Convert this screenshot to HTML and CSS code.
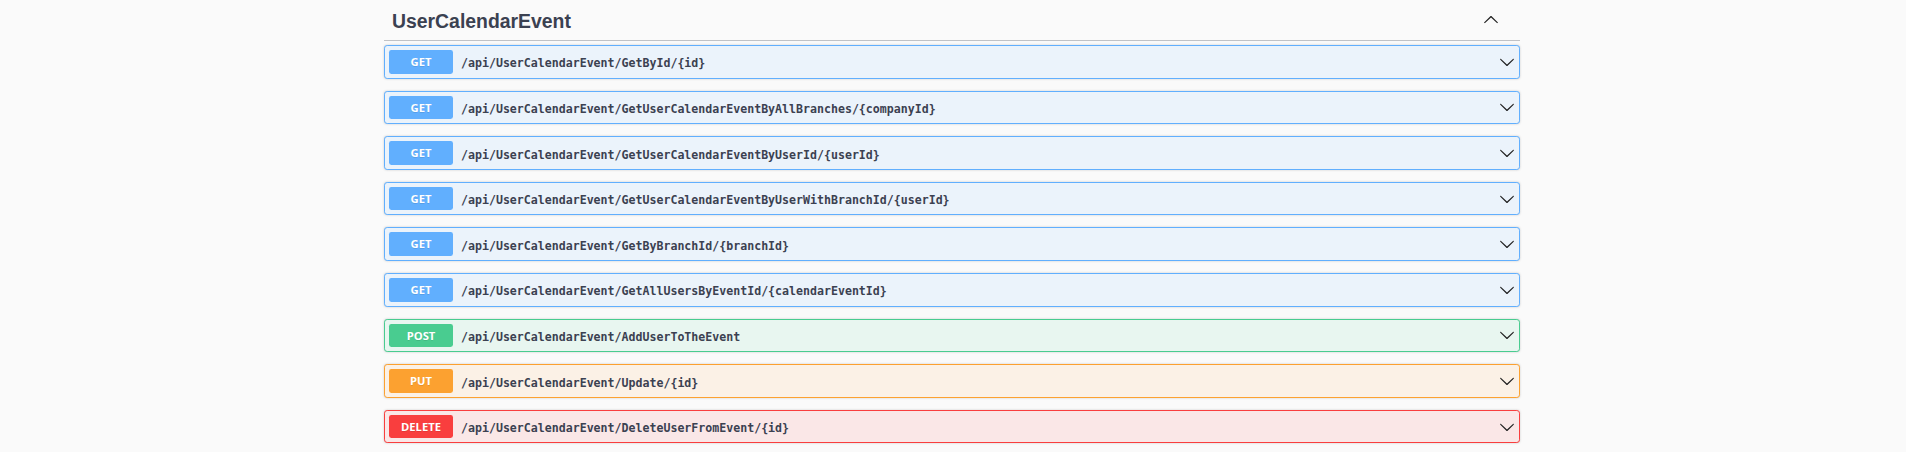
FILE: index.html
```html
<!DOCTYPE html>
<html>
<head>
<meta charset="utf-8">
<link rel="stylesheet" href="styles.css">
</head>
<body>
<div class="wrapper">
  <h3 class="tag">
    <span class="tag-name">UserCalendarEvent</span>
    <svg class="arrow arrow-up" viewBox="0 0 20 20" width="16" height="16"><path d="M17.418 6.109c.272-.268.709-.268.979 0s.279.701 0 .969l-7.908 7.83c-.27.268-.707.268-.979 0l-7.908-7.830c-.27-.268-.27-.701 0-.969.271-.268.709-.268.979 0L10 13.25l7.418-7.141z"/></svg>
  </h3>
  <div class="ops">
    <div class="op get"><span class="method">GET</span><span class="path">/api/UserCalendarEvent/GetById/{id}</span><svg class="arrow" viewBox="0 0 20 20" width="16" height="16"><path d="M17.418 6.109c.272-.268.709-.268.979 0s.279.701 0 .969l-7.908 7.83c-.27.268-.707.268-.979 0l-7.908-7.83c-.27-.268-.27-.701 0-.969.271-.268.709-.268.979 0L10 13.25l7.418-7.141z"/></svg></div>
    <div class="op get"><span class="method">GET</span><span class="path">/api/UserCalendarEvent/GetUserCalendarEventByAllBranches/{companyId}</span><svg class="arrow" viewBox="0 0 20 20" width="16" height="16"><path d="M17.418 6.109c.272-.268.709-.268.979 0s.279.701 0 .969l-7.908 7.83c-.27.268-.707.268-.979 0l-7.908-7.83c-.27-.268-.27-.701 0-.969.271-.268.709-.268.979 0L10 13.25l7.418-7.141z"/></svg></div>
    <div class="op get"><span class="method">GET</span><span class="path">/api/UserCalendarEvent/GetUserCalendarEventByUserId/{userId}</span><svg class="arrow" viewBox="0 0 20 20" width="16" height="16"><path d="M17.418 6.109c.272-.268.709-.268.979 0s.279.701 0 .969l-7.908 7.83c-.27.268-.707.268-.979 0l-7.908-7.83c-.27-.268-.27-.701 0-.969.271-.268.709-.268.979 0L10 13.25l7.418-7.141z"/></svg></div>
    <div class="op get"><span class="method">GET</span><span class="path">/api/UserCalendarEvent/GetUserCalendarEventByUserWithBranchId/{userId}</span><svg class="arrow" viewBox="0 0 20 20" width="16" height="16"><path d="M17.418 6.109c.272-.268.709-.268.979 0s.279.701 0 .969l-7.908 7.83c-.27.268-.707.268-.979 0l-7.908-7.83c-.27-.268-.27-.701 0-.969.271-.268.709-.268.979 0L10 13.25l7.418-7.141z"/></svg></div>
    <div class="op get"><span class="method">GET</span><span class="path">/api/UserCalendarEvent/GetByBranchId/{branchId}</span><svg class="arrow" viewBox="0 0 20 20" width="16" height="16"><path d="M17.418 6.109c.272-.268.709-.268.979 0s.279.701 0 .969l-7.908 7.83c-.27.268-.707.268-.979 0l-7.908-7.83c-.27-.268-.27-.701 0-.969.271-.268.709-.268.979 0L10 13.25l7.418-7.141z"/></svg></div>
    <div class="op get"><span class="method">GET</span><span class="path">/api/UserCalendarEvent/GetAllUsersByEventId/{calendarEventId}</span><svg class="arrow" viewBox="0 0 20 20" width="16" height="16"><path d="M17.418 6.109c.272-.268.709-.268.979 0s.279.701 0 .969l-7.908 7.83c-.27.268-.707.268-.979 0l-7.908-7.83c-.27-.268-.27-.701 0-.969.271-.268.709-.268.979 0L10 13.25l7.418-7.141z"/></svg></div>
    <div class="op post"><span class="method">POST</span><span class="path">/api/UserCalendarEvent/AddUserToTheEvent</span><svg class="arrow" viewBox="0 0 20 20" width="16" height="16"><path d="M17.418 6.109c.272-.268.709-.268.979 0s.279.701 0 .969l-7.908 7.83c-.27.268-.707.268-.979 0l-7.908-7.83c-.27-.268-.27-.701 0-.969.271-.268.709-.268.979 0L10 13.25l7.418-7.141z"/></svg></div>
    <div class="op put"><span class="method">PUT</span><span class="path">/api/UserCalendarEvent/Update/{id}</span><svg class="arrow" viewBox="0 0 20 20" width="16" height="16"><path d="M17.418 6.109c.272-.268.709-.268.979 0s.279.701 0 .969l-7.908 7.83c-.27.268-.707.268-.979 0l-7.908-7.83c-.27-.268-.27-.701 0-.969.271-.268.709-.268.979 0L10 13.25l7.418-7.141z"/></svg></div>
    <div class="op delete"><span class="method">DELETE</span><span class="path">/api/UserCalendarEvent/DeleteUserFromEvent/{id}</span><svg class="arrow" viewBox="0 0 20 20" width="16" height="16"><path d="M17.418 6.109c.272-.268.709-.268.979 0s.279.701 0 .969l-7.908 7.83c-.27.268-.707.268-.979 0l-7.908-7.83c-.27-.268-.27-.701 0-.969.271-.268.709-.268.979 0L10 13.25l7.418-7.141z"/></svg></div>
  </div>
</div>
</body>
</html>
```

FILE: styles.css
```css
html, body {
  margin: 0;
  padding: 0;
  background: #fafafa;
}
body {
  font-family: "Liberation Sans", Arial, sans-serif;
  color: #3b4151;
}
.wrapper {
  width: 1136px;
  margin-left: calc(50% - 569px);
}
.tag {
  display: flex;
  align-items: center;
  margin: 0 0 4px 0;
  padding: 8.6px 16px 7.4px 8px;
  height: 24px;
  border-bottom: 1px solid rgba(59, 65, 81, 0.3);
  font-size: 19.4px;
  line-height: 24px;
  font-weight: bold;
  color: #3b4151;
}
.tag-name {
  flex: 1;
}
.arrow {
  flex: none;
  fill: #222;
}
.arrow-up {
  transform: rotate(180deg);
  margin-right: 4.8px;
  margin-top: -1px;
}
.op {
  display: flex;
  align-items: center;
  height: 31.6px;
  padding: 0 4.4px 0 4px;
  margin-bottom: 12px;
  border: 1px solid;
  border-radius: 3.2px;
  box-shadow: 0 0 2.4px rgba(0, 0, 0, 0.19);
}
.method {
  flex: none;
  width: 64px;
  height: 23.6px;
  line-height: 23.6px;
  text-align: center;
  border-radius: 2.4px;
  color: #fff;
  font-family: "Open Sans", "Liberation Sans", sans-serif;
  font-size: 11.2px;
  font-weight: bold;
  text-shadow: 0 1px 0 rgba(0, 0, 0, 0.1);
}
.path {
  flex: 1;
  padding-left: 8px;
  padding-top: 3.4px;
  font-family: "DejaVu Sans Mono", "Liberation Mono", monospace;
  font-weight: bold;
  font-size: 11.6px;
  color: #3b4151;
}
.get { background: #ebf3fb; border-color: #61affe; }
.get .method { background: #61affe; }
.post { background: #e8f6f0; border-color: #49cc90; }
.post .method { background: #49cc90; }
.put { background: #fbf1e6; border-color: #fca130; }
.put .method { background: #fca130; }
.delete { background: #fae7e7; border-color: #f93e3e; }
.delete .method { background: #f93e3e; }
```
